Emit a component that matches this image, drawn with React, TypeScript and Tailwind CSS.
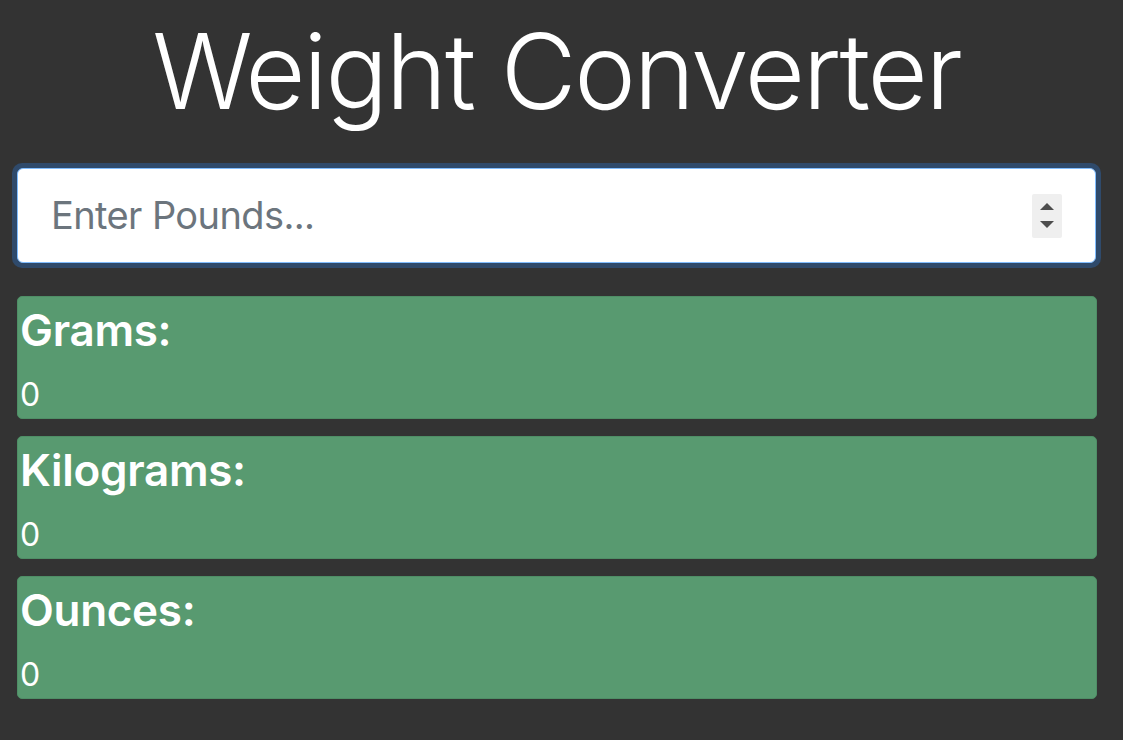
import React from "react";

function Card({ label }: { label: string }) {
  return (
    <div className="h-[123px] rounded-[5px] bg-[#589a70] border border-[#4f8e66] text-white flex flex-col">
      <div className="pl-[2px] pt-[6px] text-[44px] leading-[54px] font-semibold tracking-[-0.3px]">{label}</div>
      <div className="pl-[2px] mt-[18px] text-[32px] leading-[40px] font-normal">0</div>
    </div>
  );
}

export default function App() {
  return (
    <div
      className="w-[1123px] h-[740px] bg-[#333333] overflow-hidden"
      style={{ fontFamily: "Inter, 'Noto Sans', sans-serif" }}
    >
      <h1 className="text-center text-white font-light text-[104px] leading-[140px] tracking-[-2.2px] h-[163px] pt-[1px] pr-[10px]">
        Weight Converter
      </h1>
      <div className="pl-[12px] pr-[22px]">
        <div className="rounded-[10px] bg-[#2f4a6b] p-[5px]">
          <div className="h-[95px] rounded-[6px] bg-white border-[1.5px] border-[#80bdff] flex items-center pl-[33px] pr-[33px]">
            <span className="flex-1 text-[38px] tracking-[-0.6px] text-[#6c757d]">Enter Pounds...</span>
            <div className="w-[30px] h-[44px] bg-[#efefef] rounded-[2px] flex flex-col items-center justify-center gap-[11px]">
              <svg width="14" height="7" viewBox="0 0 14 7"><polygon points="7,0 14,7 0,7" fill="#4d4d4d" /></svg>
              <svg width="14" height="7" viewBox="0 0 14 7"><polygon points="0,0 14,0 7,7" fill="#4d4d4d" /></svg>
            </div>
          </div>
        </div>
      </div>
      <div className="px-[17px] pr-[26px] mt-[28px] flex flex-col gap-[17px]">
        <Card label="Grams:" />
        <Card label="Kilograms:" />
        <Card label="Ounces:" />
      </div>
    </div>
  );
}
